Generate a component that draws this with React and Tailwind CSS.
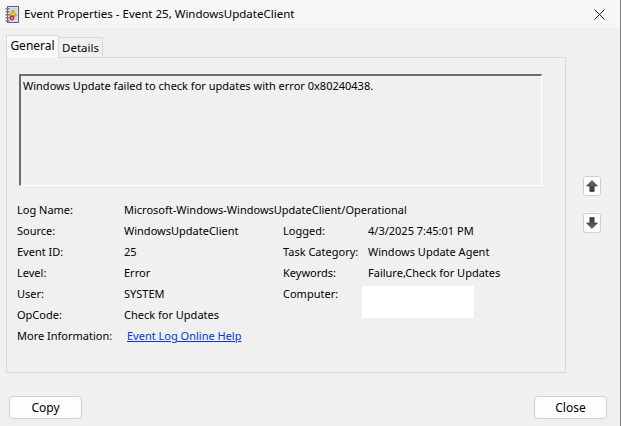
import React from 'react';

function NotebookIcon() {
  return (
    <svg width="14" height="17" viewBox="0 0 14 17">
      <rect x="2.5" y="0.5" width="11" height="16" fill="#e8eef8" stroke="#50609a" />
      <rect x="3.5" y="1.5" width="9" height="14" fill="#c9d6ee" />
      {[2, 5, 8, 11, 14].map((y) => (
        <rect key={y} x="0.5" y={y} width="4" height="1.5" fill="#7a7a7a" />
      ))}
      <path d="M8 4 L11.5 10 L4.5 10 Z" fill="#f5c518" stroke="#a07800" strokeWidth="0.6" />
      <circle cx="7" cy="12" r="2.4" fill="#d82020" />
      <rect x="6" y="11.5" width="2" height="1" fill="#fff" />
    </svg>
  );
}

function Arrow({ down }) {
  return (
    <svg width="12" height="12" viewBox="0 0 11 11" className={down ? 'rotate-180' : ''}>
      <defs>
        <linearGradient id={down ? 'gd' : 'gu'} x1="0" y1="0" x2="0" y2="1">
          <stop offset="0" stopColor="#6a6a6a" />
          <stop offset="1" stopColor="#3a3a3a" />
        </linearGradient>
      </defs>
      <path d="M5.5 0.5 L10.5 5.5 L7.5 5.5 L7.5 10.5 L3.5 10.5 L3.5 5.5 L0.5 5.5 Z" fill={`url(#${down ? 'gd' : 'gu'})`} stroke="#333" strokeWidth="0.6" />
    </svg>
  );
}

function Row({ label, value, label2, value2, children }) {
  return (
    <div className="flex h-[21px] items-center">
      <div className="w-[107px] shrink-0">{label}</div>
      {children ? (
        children
      ) : (
        <>
          <div className="w-[159px] shrink-0">{value}</div>
          <div className="w-[85px] shrink-0">{label2}</div>
          <div className="relative flex-1">{value2}</div>
        </>
      )}
    </div>
  );
}

export default function App() {
  return (
    <div
      className="relative w-[621px] h-[426px] bg-[#f0f0f0] border-r border-[#7d7d7d] text-[11px] text-black overflow-hidden"
      style={{ fontFamily: '"Noto Sans", "Open Sans", sans-serif' }}
    >
      {/* Title bar */}
      <div className="flex h-[28px] items-center bg-[#f6f6f6] pl-[5px]">
        <NotebookIcon />
        <span className="ml-[5px] text-[11.5px]">Event Properties - Event 25, WindowsUpdateClient</span>
        <div className="ml-auto mr-[11px] flex h-[28px] w-[20px] items-center justify-center">
          <svg width="11" height="11" viewBox="0 0 11 11">
            <path d="M0.5 0.5 L10.5 10.5 M10.5 0.5 L0.5 10.5" stroke="#222" strokeWidth="1" />
          </svg>
        </div>
      </div>

      {/* Tabs */}
      <div className="flex items-end pl-[6px] pt-[7px]">
        <div className="relative z-10 -mb-px flex h-[23px] w-[53px] items-center justify-center border border-b-0 border-[#d9d9d9] bg-[#f9f9f9] pb-[2px] text-[12px]">
          General
        </div>
        <div className="flex h-[20px] w-[44px] items-center justify-center border border-l-0 border-b-0 border-[#d9d9d9] bg-[#f0f0f0] pt-[1px] text-[11.5px]">
          Details
        </div>
      </div>

      <div className="flex pl-[6px]">
        {/* Panel */}
        <div className="h-[316px] w-[560px] border border-[#d9d9d9] bg-[#f0f0f0]">
          <div className="ml-[12px] mt-[16px] h-[112px] w-[523px] border-t-2 border-l-2 border-r border-b border-t-[#6d6d6d] border-l-[#6d6d6d] border-r-white border-b-white px-[2px] pt-[2px]">
            Windows Update failed to check for updates with error 0x80240438.
          </div>

          <div className="ml-[10px] mt-[14px]">
            <Row label="Log Name:">
              <div>Microsoft-Windows-WindowsUpdateClient/Operational</div>
            </Row>
            <Row label="Source:" value="WindowsUpdateClient" label2="Logged:" value2="4/3/2025 7:45:01 PM" />
            <Row label="Event ID:" value="25" label2="Task Category:" value2="Windows Update Agent" />
            <Row label="Level:" value="Error" label2="Keywords:" value2="Failure,Check for Updates" />
            <Row
              label="User:"
              value="SYSTEM"
              label2="Computer:"
              value2={<div className="absolute -left-[6px] -top-[9px] h-[32px] w-[112px] bg-white" />}
            />
            <Row label="OpCode:" value="Check for Updates" />
            <Row label="More Information:">
              <a className="ml-[3px] text-[#0037da] underline" href="#">
                Event Log Online Help
              </a>
            </Row>
          </div>
        </div>

        {/* Navigation arrows */}
        <div className="ml-[17px] mt-[119px] flex flex-col gap-[17px]">
          <div className="flex h-[20px] w-[18px] items-center justify-center rounded-[3px] border border-[#cfcfcf] bg-white">
            <Arrow />
          </div>
          <div className="flex h-[20px] w-[18px] items-center justify-center rounded-[3px] border border-[#cfcfcf] bg-white">
            <Arrow down />
          </div>
        </div>
      </div>

      {/* Bottom buttons */}
      <div className="mt-[23px] flex justify-between pl-[9px] pr-[13px]">
        <button className="h-[23px] w-[73px] rounded-[4px] border border-[#d0d0d0] bg-[#fdfdfd] text-[12px]">Copy</button>
        <button className="h-[23px] w-[73px] rounded-[4px] border border-[#d0d0d0] bg-[#fdfdfd] text-[12px]">Close</button>
      </div>
    </div>
  );
}
